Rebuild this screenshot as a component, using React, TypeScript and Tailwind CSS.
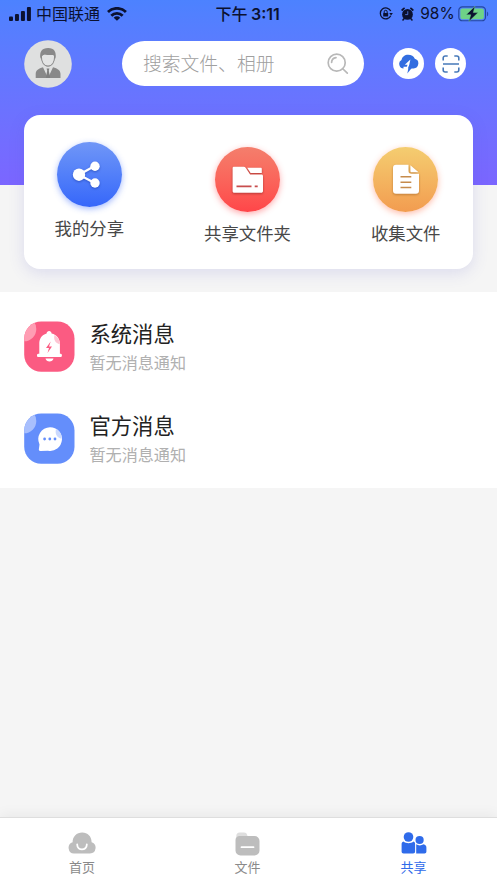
import type { ReactNode } from "react";

function StatusBar() {
  return (
    <div className="flex h-[27px] items-center pl-[9px] pr-[8px] text-[#0b1130]">
      <svg width="22" height="14" viewBox="0 0 22 14" fill="currentColor">
        <rect x="0" y="9.5" width="4" height="4.5" rx="1" />
        <rect x="6" y="7" width="4" height="7" rx="1" />
        <rect x="12" y="4" width="4" height="10" rx="1" />
        <rect x="18" y="0" width="4" height="14" rx="1" />
      </svg>
      <span className="ml-[5px] w-[65px] whitespace-nowrap pt-[2px] text-[16px] leading-[25px]">中国联通</span>
      <svg className="ml-[6px]" width="20" height="14" viewBox="0 0 20 14" fill="none" stroke="currentColor" strokeWidth="2.8">
        <path d="M1 5a12.8 12.8 0 0 1 18 0" />
        <path d="M4.3 8.8a8 8 0 0 1 11.4 0" />
        <path d="M10 13.9 6.7 10.7a4.7 4.7 0 0 1 6.6 0z" fill="currentColor" stroke="none" />
      </svg>
      <span className="ml-[89px] w-[66px] whitespace-nowrap pt-[2px] text-[16px] font-medium leading-[25px]">
        下午 <span className="-ml-[1px] font-['Inter'] text-[16px] font-semibold">3:11</span>
      </span>
      <svg className="ml-[98px]" width="14" height="13" viewBox="0 0 14 13" fill="none" stroke="currentColor">
        <path d="M11.8 8.8A5.5 5.5 0 1 1 11.8 4" strokeWidth="1.3" />
        <path d="M10.3 6h3.6l-1.8 2.5z" fill="currentColor" stroke="none" />
        <rect x="4.2" y="5.9" width="5" height="3.6" rx=".5" fill="currentColor" stroke="none" />
        <path d="M5.2 6V4.8a1.5 1.5 0 0 1 3 0V6" />
      </svg>
      <svg className="ml-[8px]" width="13" height="14" viewBox="0 0 13 14">
        <circle cx="6.5" cy="7.4" r="5.4" fill="currentColor" />
        <path d="M1.2 3 3 1.4M11.8 3 10 1.4" stroke="currentColor" strokeWidth="1.8" strokeLinecap="round" />
        <path d="M3 11.8l-1 1.200M10 11.8l1 1.200" stroke="currentColor" strokeWidth="1.6" strokeLinecap="round" />
        <path d="M6.8 4.2v3.4H4.2" fill="none" stroke="#5581f5" strokeWidth=".8" />
      </svg>
      <span className="ml-[6px] w-[35px] whitespace-nowrap pt-[1px] font-['Inter'] text-[15.5px]">98%</span>
      <svg className="ml-[3px]" width="31" height="16" viewBox="0 0 31 16">
        <rect x=".8" y=".8" width="26.8" height="14" rx="3.6" fill="none" stroke="#24479f" strokeWidth="1.2" />
        <rect x="2.4" y="2.4" width="23.6" height="10.8" rx="2.2" fill="#6ed287" />
        <path d="M29.2 5.4c1.5.7 1.5 4.2 0 4.9z" fill="#24479f" />
        <path d="M17 .2 8.2 8.8h4.6L10.9 15.6 20.2 6.6h-4.8z" fill="#0b1130" stroke="#6ed287" strokeWidth=".5" />
      </svg>
    </div>
  );
}

function Avatar() {
  return (
    <svg width="48" height="48" viewBox="0 0 48 48">
      <circle cx="24" cy="24" r="23.8" fill="#dfe0e0" />
      <path d="M11.700 38v-4c0-4 3-5.500 7.300-6.800L24 38l5-10.800c4.500 1.300 7.500 2.800 7.500 6.800v4z" fill="#898989" />
      <path d="M22.600 28.600h2.800l-.6 2.200 1.400 7.200h-4.400l1.400-7.200z" fill="#7f7f7f" />
      <path d="M17.300 15.500c0 6.500 2.700 10.600 6.700 10.600s6.700-4.100 6.700-10.600l-3-2h-7z" fill="#e3e4e4" stroke="#898989" strokeWidth="1.100" />
      <path d="M16.500 19c-1.200-7.500 1.200-11 7.700-11 6 0 8.400 3.500 7.300 11l-1.400-4c-3 .2-7.500.1-9.800-.5-1.500.5-2.800 1-3.800 4.500z" fill="#898989" />
    </svg>
  );
}

function SearchIcon() {
  return (
    <svg width="22" height="22" viewBox="0 0 22 22" fill="none" stroke="#b8b8b8" strokeWidth="1.700" strokeLinecap="round">
      <circle cx="9.700" cy="9.700" r="8.500" />
      <path d="m16 16 4.300 4.100M4.600 9.400a5 5 0 0 1 4.400-4.800" />
    </svg>
  );
}

function TransferIcon() {
  return (
    <svg width="20" height="20" viewBox="0 0 20 20">
      <path d="M5 14.400A4.500 4.500 0 0 1 2.500 6C3.100 2.700 5.800.7 9.200.7c3 0 5.700 1.500 6.600 4.100A4.900 4.900 0 0 1 14.600 14.400z" fill="#326de0" />
      <path d="M5.800 10.800 11.400 5.400 10.300 10.600 9 15H7.200l1.300-4.200z" fill="#fff" />
      <path d="M4.500 12.700h4.200L8 15H4.500z" fill="#fff" />
      <path d="M9.800 12.300h4.400L8.300 19.400z" fill="#326de0" />
    </svg>
  );
}

function ScanIcon() {
  return (
    <svg width="18" height="18" viewBox="0 0 18 18" fill="none" stroke="#4779b9" strokeWidth="1.600">
      <path d="M1.200 5.500V3a2 2 0 0 1 2-2h2.500M12.300 1h2.500a2 2 0 0 1 2 2v2.500M16.800 12.500V15a2 2 0 0 1-2 2h-2.500M5.700 17H3.200a2 2 0 0 1-2-2v-2.500M1 9h16" />
    </svg>
  );
}

function ShareIcon() {
  return (
    <svg width="30" height="30" viewBox="0 0 30 30" className="-translate-x-[3px] drop-shadow-[0_1px_1px_rgba(20,50,150,0.5)]">
      <path d="M23.200 6.200 8 14.700l15.200 8" fill="none" stroke="#fff" strokeWidth="2.200" />
      <circle cx="8" cy="14.700" r="6.200" fill="#fff" />
      <circle cx="24" cy="6.200" r="4.700" fill="#fff" />
      <circle cx="24" cy="23" r="4.700" fill="#fff" />
    </svg>
  );
}

function FolderIcon() {
  return (
    <svg width="32" height="28" viewBox="0 0 32 28" className="drop-shadow-[0_1px_1px_rgba(130,30,30,0.6)]">
      <path d="M2 .8h9.600c1 0 1.700.4 2.200 1.200l4.300 6.600h11.300c1.100 0 1.600.6 1.600 1.700V25c0 1.200-.7 1.800-1.800 1.800H2.400C1.200 26.800.6 26.100.6 25V2.300C.6 1.300 1.100.8 2 .8z" fill="#fff" />
      <path d="M15.200 1.800h13.500c.7 0 1.100.4 1.100 1.100v4.200H18.600z" fill="#fff" />
      <path d="M4.500 20.400h15M22.700 20.400h3" stroke="#c84d4d" strokeWidth="1.700" />
    </svg>
  );
}

function DocIcon() {
  return (
    <svg width="28" height="31" viewBox="0 0 28 31" className="drop-shadow-[0_1px_1px_rgba(140,80,20,0.5)]">
      <path d="M4 .7h12.500V7c0 1.800 1 2.700 2.700 2.700H27v17a3 3 0 0 1-3 3H4a3 3 0 0 1-3-3v-23a3 3 0 0 1 3-3z" fill="#fff" />
      <path d="M18.400 1.300 26.600 8.300h-7.200a1 1 0 0 1-1-1z" fill="#fff" />
      <path d="M8.500 12.800h10.800M8.500 18.200h10.800M8.500 23.600h10.800" stroke="#c68b4c" strokeWidth="1.500" />
    </svg>
  );
}

function BellTile() {
  return (
    <svg width="51" height="51" viewBox="0 0 51 51">
      <clipPath id="bell-tile">
        <rect x=".2" y=".5" width="50.300" height="50.200" rx="17" />
      </clipPath>
      <g clipPath="url(#bell-tile)">
        <rect width="51" height="51" fill="#fb5b82" />
        <circle cx="0" cy="8" r="12.300" fill="#ff9db3" />
      </g>
      <path d="M22.600 12.600c0-3.500 5-3.500 5 0 5.300 1.300 8.300 5.300 8.300 10.500v9.700h.9c1.500 0 1.500 3.300 0 3.300H14.200c-1.600 0-1.600-3.300 0-3.300h1.100v-9.700c0-5.300 2.300-9 7.300-10.500z" fill="#fff" />
      <path d="M30.500 13.900c3.600 1.800 5.300 5.200 5.300 9.300-4.200-1-6.600-4.700-5.300-9.300z" fill="#fec5d3" />
      <path d="M21.500 37.500h8c-.6 4-7.400 4-8 0z" fill="#fff" />
      <path d="m26.700 20.400-4.700 6.700h3l-1.500 5 4.500-6.600h-3z" fill="#fb5b82" />
    </svg>
  );
}

function ChatTile() {
  return (
    <svg width="51" height="51" viewBox="0 0 51 51">
      <clipPath id="chat-tile">
        <rect x=".2" y=".5" width="50.300" height="50.200" rx="17" />
      </clipPath>
      <g clipPath="url(#chat-tile)">
        <rect width="51" height="51" fill="#648efb" />
        <circle cx="0" cy="8" r="12.300" fill="#a8bffd" />
      </g>
      <path d="M26 14.300a11.800 11.800 0 1 1-2 23.400l-7.400.4c-1.500.1-2-.8-1.700-2l.6-4.700A11.800 11.800 0 0 1 26 14.300z" fill="#fff" />
      <path d="M32 16c4 2 6 5.500 5.700 9.800-4.800-1.200-7-5-5.700-9.800z" fill="#cbd9fe" />
      <circle cx="20.600" cy="26" r="1.400" fill="#648efb" />
      <circle cx="25.800" cy="26" r="1.400" fill="#648efb" />
      <circle cx="31" cy="26" r="1.400" fill="#648efb" />
    </svg>
  );
}

function HomeIcon() {
  return (
    <svg width="28" height="22" viewBox="0 0 28 22" className="-translate-y-[1px]">
      <path d="M6 21.500A5.800 5.800 0 0 1 4.600 10.200C4.600 4.500 8.700.5 14.200.5s9.500 4 9.400 9.700A5.800 5.800 0 0 1 22 21.500z" fill="#bdbdbd" />
      <path d="M9.200 12.500c0 6.600 9.600 6.600 9.600 0" fill="none" stroke="#fff" strokeWidth="1.800" strokeLinecap="round" />
    </svg>
  );
}

function FilesIcon() {
  return (
    <svg width="25" height="24" viewBox="0 0 25 24">
      <path d="M1.300 7V4A3.500 3.500 0 0 1 4.800.5H9c2 0 3 1 3.500 3.500z" fill="#dedede" />
      <path d="M5 4h14.500a5 5 0 0 1 5 5v9.500a5 5 0 0 1-5 5H5.500a5 5 0 0 1-5-5V8A4 4 0 0 1 5 4z" fill="#bdbdbd" />
      <path d="M6.500 15.200h12" stroke="#fff" strokeWidth="1.800" strokeLinecap="round" />
    </svg>
  );
}

function PeopleIcon() {
  return (
    <svg width="26" height="22" viewBox="0 0 26 22" fill="#2f6bea" className="-translate-y-[1px]">
      <circle cx="7.500" cy="5" r="4.800" />
      <circle cx="18.600" cy="8" r="4.100" />
      <path d="M2.300 9.600c2.900 2.300 7.500 2.300 10.400 0 1 .4 1.400 1.400 1.400 2.700V19.500c0 1.300-.7 2-2 2H2.600c-1.300 0-2-.7-2-2v-7.200c0-1.300.6-2.300 1.700-2.700z" />
      <path d="M15.200 12.300c2 1.500 5.200 1.500 7.300 0 2 .4 2.900 1.500 2.900 3.300V19.500c0 1.300-.7 2-2 2h-8.200z" />
    </svg>
  );
}

interface ActionProps {
  label: string;
  icon: ReactNode;
  className: string;
  circle: string;
}

function Action({ label, icon, className, circle }: ActionProps) {
  return (
    <div className={`flex flex-col items-center ${className}`}>
      <div className={`flex size-[65px] items-center justify-center rounded-full bg-linear-to-b ${circle}`}>{icon}</div>
      <span className="mt-[9px] whitespace-nowrap text-[17.400px] leading-[26px] text-[#484848]">{label}</span>
    </div>
  );
}

const messages = [
  { title: "系统消息", icon: <BellTile /> },
  { title: "官方消息", icon: <ChatTile /> },
];

const tabs = [
  { label: "首页", icon: <HomeIcon />, active: false },
  { label: "文件", icon: <FilesIcon />, active: false },
  { label: "共享", icon: <PeopleIcon />, active: true },
];

export default function App() {
  return (
    <div className="flex h-[883px] w-[497px] flex-col overflow-hidden bg-[#f5f5f5] font-['Liberation_Sans','Noto_Sans_CJK_SC',sans-serif]">
      {/* Header */}
      <header className="h-[185px] shrink-0 bg-linear-to-b from-[#4c82ff] to-[#7b66ff]">
        <StatusBar />
        <div className="flex items-center pl-[24px] pt-[12.5px]">
          <Avatar />
          <div className="ml-[50px] flex h-[45px] w-[242px] items-center justify-between rounded-full bg-white pl-[21px] pr-[15px]">
            <span className="pt-[3px] text-[18.800px] font-light text-[#a0a0a0]">搜索文件、相册</span>
            <SearchIcon />
          </div>
          <div className="ml-[29px] flex size-[31px] items-center justify-center rounded-full bg-white">
            <TransferIcon />
          </div>
          <div className="ml-[11px] flex size-[31px] items-center justify-center rounded-full bg-white">
            <ScanIcon />
          </div>
        </div>
      </header>

      {/* Quick actions */}
      <section className="relative mx-[24px] -mt-[70px] flex h-[154px] shrink-0 justify-between rounded-[16px] bg-white pl-[30.5px] pr-[32.5px] shadow-[0_4px_16px_rgba(90,90,200,0.16)]">
        <Action
          label="我的分享"
          icon={<ShareIcon />}
          className="pt-[27px]"
          circle="from-[#7096f7] to-[#3666fa] shadow-[0_2px_6px_rgba(54,102,250,0.45)]"
        />
        <Action
          label="共享文件夹"
          icon={<FolderIcon />}
          className="pt-[32px]"
          circle="from-[#f47e6c] to-[#ff4549] shadow-[0_2px_6px_rgba(255,69,73,0.45)]"
        />
        <Action
          label="收集文件"
          icon={<DocIcon />}
          className="pt-[32px]"
          circle="from-[#f4cd70] to-[#f29c50] shadow-[0_2px_6px_rgba(255,110,70,0.45)]"
        />
      </section>

      {/* Messages */}
      <section className="mt-[23px] flex h-[196px] shrink-0 flex-col gap-[40.5px] bg-white pl-[24px] pt-[29px]">
        {messages.map((m) => (
          <div key={m.title} className="flex h-[51px] items-center">
            {m.icon}
            <div className="ml-[14.5px] pt-[3px]">
              <p className="text-[21.300px] leading-[30px] text-[#222]">{m.title}</p>
              <p className="text-[16.100px] leading-[26px] text-[#b0b0b0]">暂无消息通知</p>
            </div>
          </div>
        ))}
      </section>

      {/* Tab bar */}
      <nav className="mt-auto grid h-[66px] shrink-0 grid-cols-[164px_167px_165px] border-t border-[#dedede] bg-white shadow-[0_-3px_12px_rgba(0,0,0,0.05)]">
        {tabs.map((t) => (
          <div key={t.label} className="flex flex-col items-center pt-[13px]">
            <div className="flex h-[25px] items-center">{t.icon}</div>
            <span className={`text-[13px] leading-[24px] ${t.active ? "text-[#2f6bea]" : "text-[#8a8a8a]"}`}>{t.label}</span>
          </div>
        ))}
      </nav>
    </div>
  );
}
